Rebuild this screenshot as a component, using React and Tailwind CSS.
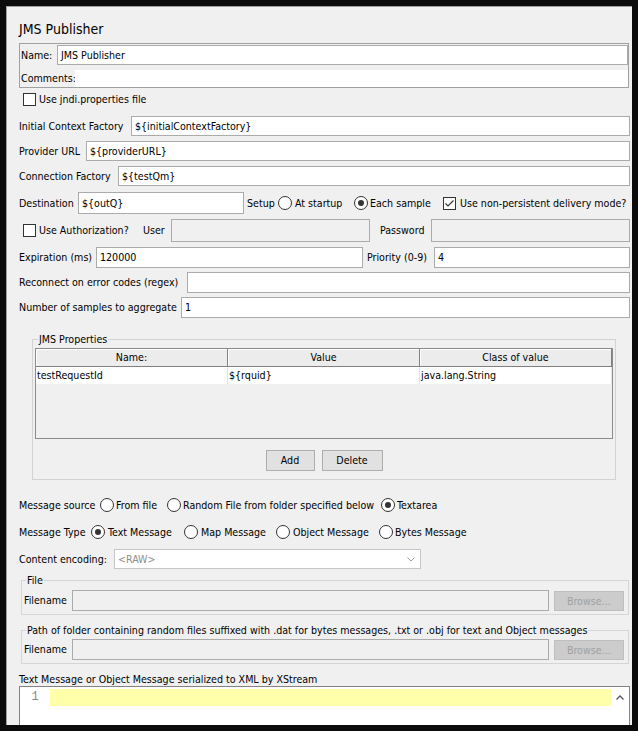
import React from "react";

const Radio = ({ checked }) => (
  <span className="flex h-[14px] w-[14px] shrink-0 items-center justify-center rounded-full border border-[#333333] bg-white">
    {checked && <span className="h-[6px] w-[6px] rounded-full bg-[#333333]" />}
  </span>
);

const Check = ({ checked }) => (
  <span className="flex h-[13px] w-[13px] shrink-0 items-center justify-center border border-[#333333] bg-white">
    {checked && (
      <svg width="11" height="11" viewBox="0 0 11 11">
        <path d="M1.5 5.5 L4 8 L9.5 2.5" fill="none" stroke="#333333" strokeWidth="1.2" />
      </svg>
    )}
  </span>
);

const Field = ({ value = "", className = "", disabled = false }) => (
  <div
    className={`flex h-full items-center overflow-hidden whitespace-nowrap border border-[#ababab] pl-[3px] ${
      disabled ? "bg-[#f0f0f0]" : "bg-white"
    } ${className}`}
  >
    {value}
  </div>
);

const LabeledRow = ({ label, labelW, value, mt, h }) => (
  <div className={`flex items-center ${mt} ${h}`}>
    <span className={`shrink-0 whitespace-nowrap ${labelW}`}>{label}</span>
    <Field value={value} className="flex-1" />
  </div>
);

const Browse = () => (
  <div className="mt-[1px] flex h-[20px] w-[70px] shrink-0 items-center justify-center border border-[#bfbfbf] bg-[#cccccc] text-[#a0a0a0]">
    Browse…
  </div>
);

export default function App() {
  return (
    <div className="h-[731px] w-[638px] overflow-hidden bg-[#0b0b0b] pl-[6px] pt-[6px] font-['DejaVu_Sans_Condensed','Liberation_Sans',Arial,sans-serif] text-[10.6px] leading-[13px] text-black">
      <div className="h-[719px] w-[626px] overflow-hidden border-l border-t border-[#a0a0a0] bg-[#f0f0f0] pl-[12px] pr-[2px] pt-[13px]">
        <div className="h-[18px] text-[14px] leading-[18px]">JMS Publisher</div>

        {/* Name / Comments */}
        <div className="mr-[1px] mt-[5px] flex h-[45px] flex-col border border-[#a0a0a0]">
          <div className="mt-[1px] flex h-[20px] shrink-0 items-center">
            <span className="w-[37px] shrink-0 pl-[1px]">Name:</span>
            <Field value="JMS Publisher" className="flex-1" />
          </div>
          <div className="mt-[5px] flex h-[17px] shrink-0 items-center">
            <span className="w-[55px] shrink-0 whitespace-nowrap pl-[1px]">Comments:</span>
            <div className="h-full flex-1 bg-white" />
          </div>
        </div>

        <div className="mt-[1px] flex h-[20px] items-center gap-[3px] pl-[4px]">
          <Check />
          <span>Use jndi.properties file</span>
        </div>

        <LabeledRow label="Initial Context Factory" labelW="w-[112px]" value="${initialContextFactory}" mt="mt-[7px]" h="h-[20px]" />
        <LabeledRow label="Provider URL" labelW="w-[67px]" value="${providerURL}" mt="mt-[5px]" h="h-[20px]" />
        <LabeledRow label="Connection Factory" labelW="w-[99px]" value="${testQm}" mt="mt-[5px]" h="h-[20px]" />

        {/* Destination */}
        <div className="mt-[6px] flex h-[22px] items-center">
          <span className="w-[59px] shrink-0">Destination</span>
          <Field value="${outQ}" className="w-[166px] shrink-0" />
          <span className="w-[34px] shrink-0 pl-[3px]">Setup</span>
          <Radio />
          <span className="w-[62px] shrink-0 whitespace-nowrap pl-[3px]">At startup</span>
          <Radio checked />
          <span className="w-[75px] shrink-0 whitespace-nowrap pl-[2px]">Each sample</span>
          <Check checked />
          <span className="whitespace-nowrap pl-[4px]">Use non-persistent delivery mode?</span>
        </div>

        {/* Authorization */}
        <div className="mt-[5px] flex h-[23px] items-center">
          <div className="flex w-[124px] shrink-0 items-center gap-[3px] pl-[4px]">
            <Check />
            <span className="whitespace-nowrap">Use Authorization?</span>
          </div>
          <span className="w-[28px] shrink-0">User</span>
          <Field disabled className="w-[199px] shrink-0" />
          <span className="w-[61px] shrink-0 pl-[10px]">Password</span>
          <Field disabled className="flex-1" />
        </div>

        {/* Expiration / Priority */}
        <div className="mt-[5px] flex h-[21px] items-center">
          <span className="w-[77px] shrink-0 whitespace-nowrap">Expiration (ms)</span>
          <Field value="120000" className="w-[267px] shrink-0" />
          <span className="w-[71px] shrink-0 whitespace-nowrap pl-[4px]">Priority (0-9)</span>
          <Field value="4" className="flex-1" />
        </div>

        <LabeledRow label="Reconnect on error codes (regex)" labelW="w-[168px]" value="" mt="mt-[4px]" h="h-[21px]" />
        <LabeledRow label="Number of samples to aggregate" labelW="w-[162px]" value="1" mt="mt-[4px]" h="h-[21px]" />

        {/* JMS Properties */}
        <div className="relative ml-[13px] mr-[14px] mt-[21px] flex h-[141px] flex-col border border-[#d2d2d2] px-[2px] pb-[8px] pt-[8px]">
          <span className="absolute left-[5px] top-[-7px] bg-[#f0f0f0] px-[1px] leading-[13px]">JMS Properties</span>
          <div className="flex h-[91px] shrink-0 flex-col border border-[#8a8a8a] bg-[#f0f0f0]">
            <div className="grid h-[18px] shrink-0 grid-cols-3">
              {["Name:", "Value", "Class of value"].map((t) => (
                <div
                  key={t}
                  className="flex items-center justify-center border-b border-r border-[#808080] bg-[#ececec] shadow-[inset_1px_1px_0_#ffffff]"
                >
                  {t}
                </div>
              ))}
            </div>
            <div className="grid h-[17px] shrink-0 grid-cols-3 bg-white">
              {["testRequestId", "${rquid}", "java.lang.String"].map((t) => (
                <div key={t} className="flex items-center border-r border-[#e4e4e4] pl-[1px]">
                  {t}
                </div>
              ))}
            </div>
          </div>
          <div className="mt-[11px] flex h-[21px] shrink-0 justify-center gap-[7px]">
            <div className="flex w-[49px] items-center justify-center border border-[#adadad] bg-[#e1e1e1]">Add</div>
            <div className="flex w-[61px] items-center justify-center border border-[#adadad] bg-[#e1e1e1]">Delete</div>
          </div>
        </div>

        {/* Message source */}
        <div className="mt-[15px] flex h-[20px] items-center">
          <span className="w-[81px] shrink-0 whitespace-nowrap">Message source</span>
          <Radio />
          <span className="w-[53px] shrink-0 whitespace-nowrap pl-[2px]">From file</span>
          <Radio />
          <span className="w-[200px] shrink-0 whitespace-nowrap pl-[2px]">Random File from folder specified below</span>
          <Radio checked />
          <span className="pl-[2px]">Textarea</span>
        </div>

        {/* Message Type */}
        <div className="mt-[7px] flex h-[20px] items-center">
          <span className="w-[72px] shrink-0 whitespace-nowrap">Message Type</span>
          <Radio checked />
          <span className="w-[79px] shrink-0 whitespace-nowrap pl-[3px]">Text Message</span>
          <Radio />
          <span className="w-[78px] shrink-0 whitespace-nowrap pl-[3px]">Map Message</span>
          <Radio />
          <span className="w-[89px] shrink-0 whitespace-nowrap pl-[3px]">Object Message</span>
          <Radio />
          <span className="whitespace-nowrap pl-[2px]">Bytes Message</span>
        </div>

        {/* Content encoding */}
        <div className="mt-[7px] flex h-[20px] items-center">
          <span className="w-[95px] shrink-0 whitespace-nowrap">Content encoding:</span>
          <div className="flex h-full w-[307px] items-center justify-between border border-[#c6c6c6] bg-white pl-[3px] pr-[5px] text-[#8d8d8d]">
            <span>&lt;RAW&gt;</span>
            <svg width="8" height="5" viewBox="0 0 8 5">
              <path d="M0.5 0.5 L4 4 L7.5 0.5" fill="none" stroke="#9a9a9a" strokeWidth="1" />
            </svg>
          </div>
        </div>

        {/* File */}
        <div className="relative ml-[2px] mr-[1px] mt-[11px] h-[35px] border border-[#d5d5d5] pl-[2px] pr-[4px] pt-[9px]">
          <span className="absolute left-[4px] top-[-7px] bg-[#f0f0f0] px-[1px] leading-[13px]">File</span>
          <div className="flex h-[21px] items-start">
            <span className="flex h-full w-[48px] shrink-0 items-center">Filename</span>
            <Field disabled className="flex-1" />
            <div className="w-[5px] shrink-0" />
            <Browse />
          </div>
        </div>

        {/* Path */}
        <div className="relative ml-[2px] mr-[1px] mt-[15px] h-[34px] border border-[#d5d5d5] pl-[2px] pr-[4px] pt-[8px]">
          <span className="absolute left-[4px] top-[-7px] whitespace-nowrap bg-[#f0f0f0] px-[1px] leading-[13px]">
            Path of folder containing random files suffixed with .dat for bytes messages, .txt or .obj for text and Object messages
          </span>
          <div className="flex h-[21px] items-start">
            <span className="flex h-full w-[48px] shrink-0 items-center">Filename</span>
            <Field disabled className="flex-1" />
            <div className="w-[5px] shrink-0" />
            <Browse />
          </div>
        </div>

        <div className="mt-[8px] flex h-[14px] items-center whitespace-nowrap">
          Text Message or Object Message serialized to XML by XStream
        </div>

        {/* Textarea */}
        <div className="flex h-[60px] border border-[#828282] bg-white">
          <div className="w-[30px] shrink-0 pt-[2px] text-center font-['Liberation_Mono',monospace] text-[12px] leading-[17px] text-[#888888]">
            1
          </div>
          <div className="flex-1 pt-[2px]">
            <div className="h-[17px] bg-[#ffffaa]" />
          </div>
          <div className="flex w-[18px] shrink-0 justify-center pt-[8px]">
            <svg width="8" height="5" viewBox="0 0 8 5">
              <path d="M0.5 4.5 L4 1 L7.5 4.5" fill="none" stroke="#555555" strokeWidth="1.3" />
            </svg>
          </div>
        </div>
      </div>
    </div>
  );
}
